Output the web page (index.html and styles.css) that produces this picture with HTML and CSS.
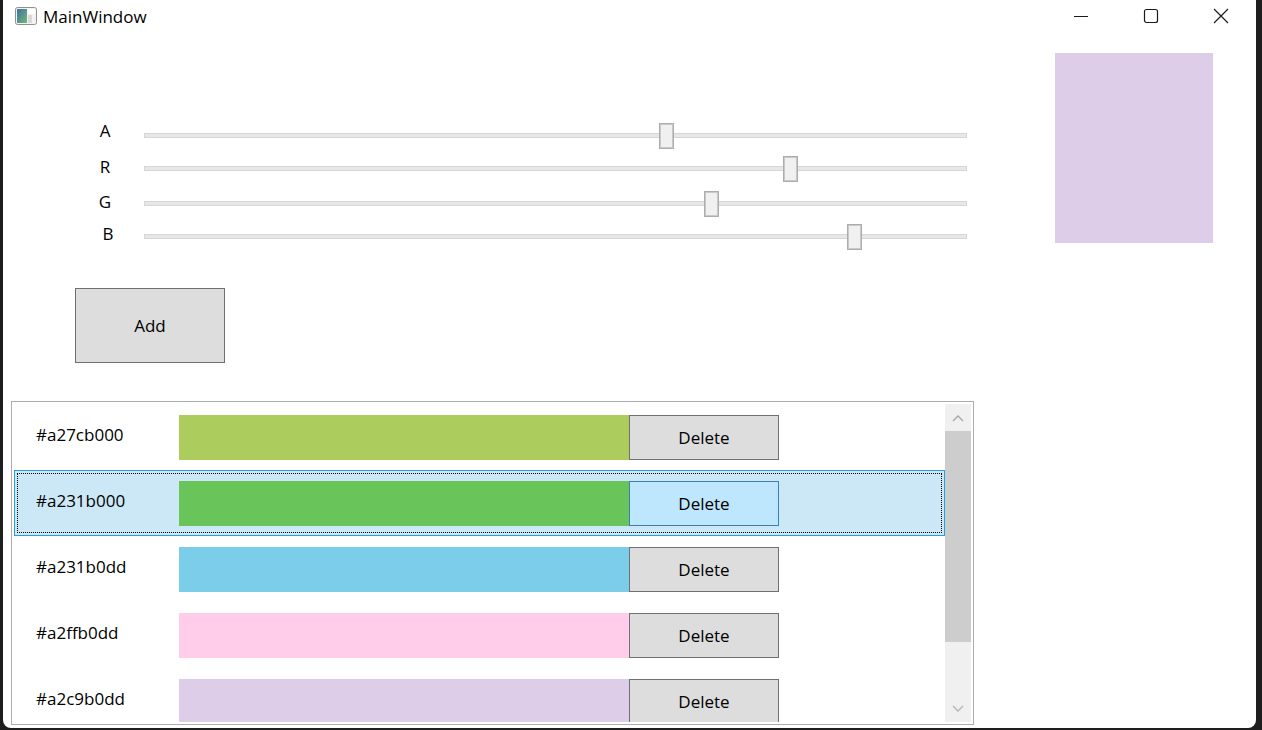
FILE: index.html
```html
<!DOCTYPE html>
<html>
<head>
<meta charset="utf-8">
<title>MainWindow</title>
<link rel="stylesheet" href="styles.css">
</head>
<body>
<div class="window">
  <div class="titlebar">
    <svg class="app-icon" width="22" height="18" viewBox="0 0 22 18">
      <defs>
        <linearGradient id="g" x1="0" y1="0" x2="1" y2="1">
          <stop offset="0" stop-color="#3f6fa6"/>
          <stop offset="1" stop-color="#6dbb73"/>
        </linearGradient>
      </defs>
      <rect x="0.5" y="0.5" width="21" height="17" rx="2" fill="#f3f3f3" stroke="#8f8f8f"/>
      <rect x="2" y="2" width="10" height="14" fill="url(#g)"/>
      <rect x="13" y="2" width="7" height="5" fill="#ffffff"/>
      <rect x="13" y="8" width="4" height="8" fill="#d9d9d9"/>
    </svg>
    <span class="title">MainWindow</span>
    <div class="caption">
      <span class="cap-btn">
        <svg width="16" height="16" viewBox="0 0 16 16"><line x1="1" y1="8.5" x2="15" y2="8.5" stroke="#1a1a1a" stroke-width="1"/></svg>
      </span>
      <span class="cap-btn">
        <svg width="16" height="16" viewBox="0 0 16 16"><rect x="1.5" y="1.5" width="13" height="13" rx="2" fill="none" stroke="#1a1a1a" stroke-width="1.2"/></svg>
      </span>
      <span class="cap-btn">
        <svg width="16" height="16" viewBox="0 0 16 16"><path d="M1 1 L15 15 M15 1 L1 15" stroke="#1a1a1a" stroke-width="1.2"/></svg>
      </span>
    </div>
  </div>

  <div class="main">
    <div class="left">
      <div class="sliders">
        <div class="srow">
          <span class="slabel">A</span>
          <div class="track"><div class="thumb" style="--v:0.635"></div></div>
        </div>
        <div class="srow">
          <span class="slabel">R</span>
          <div class="track"><div class="thumb" style="--v:0.788"></div></div>
        </div>
        <div class="srow">
          <span class="slabel">G</span>
          <div class="track"><div class="thumb" style="--v:0.69"></div></div>
        </div>
        <div class="srow">
          <span class="slabel b">B</span>
          <div class="track"><div class="thumb" style="--v:0.867"></div></div>
        </div>
      </div>

      <button class="btn add">Add</button>

      <div class="listbox">
        <div class="items">
          <div class="item">
            <span class="hex">#a27cb000</span>
            <span class="bar" style="background: rgba(124,176,0,0.635)"></span>
            <span class="btn del">Delete</span>
          </div>
          <div class="item selected">
            <span class="hex">#a231b000</span>
            <span class="bar" style="background: rgba(49,176,0,0.635)"></span>
            <span class="btn del">Delete</span>
          </div>
          <div class="item">
            <span class="hex">#a231b0dd</span>
            <span class="bar" style="background: rgba(49,176,221,0.635)"></span>
            <span class="btn del">Delete</span>
          </div>
          <div class="item">
            <span class="hex">#a2ffb0dd</span>
            <span class="bar" style="background: rgba(255,176,221,0.635)"></span>
            <span class="btn del">Delete</span>
          </div>
          <div class="item">
            <span class="hex">#a2c9b0dd</span>
            <span class="bar" style="background: rgba(201,176,221,0.635)"></span>
            <span class="btn del">Delete</span>
          </div>
        </div>
        <div class="scrollbar">
          <div class="sb-btn up">
            <svg width="12" height="8" viewBox="0 0 12 8"><polyline points="1,7 6,2 11,7" fill="none" stroke="#a6a6a6" stroke-width="1.3"/></svg>
          </div>
          <div class="sb-track"><div class="sb-thumb"></div></div>
          <div class="sb-btn down">
            <svg width="12" height="8" viewBox="0 0 12 8"><polyline points="1,1 6,6 11,1" fill="none" stroke="#b3b3b3" stroke-width="1.3"/></svg>
          </div>
        </div>
      </div>
    </div>

    <div class="preview" style="background: rgba(201,176,221,0.635)"></div>
  </div>
</div>
</body>
</html>
```

FILE: styles.css
```css
* { box-sizing: border-box; }

html, body {
  margin: 0;
  padding: 0;
  width: 1262px;
  height: 730px;
  overflow: hidden;
  background: #1e1e1e;
  font-family: "Open Sans", "Noto Sans", sans-serif;
  color: #000;
}

.window {
  margin-left: 3px;
  width: 1253px;
  height: 728px;
  background: #ffffff;
  border-radius: 0 0 8px 8px;
  overflow: hidden;
  display: flex;
  flex-direction: column;
}

.titlebar {
  height: 31px;
  flex: none;
  display: flex;
  align-items: center;
}

.app-icon {
  margin-left: 12px;
  margin-top: 1px;
}

.title {
  margin-left: 6px;
  font-size: 17px;
  margin-top: 1px;
}

.caption {
  margin-left: auto;
  display: flex;
  height: 31px;
}

.cap-btn {
  width: 70px;
  height: 31px;
  display: flex;
  align-items: center;
  justify-content: center;
}

.main {
  display: flex;
  flex: 1;
}

.left {
  width: 971px;
  flex: none;
  display: flex;
  flex-direction: column;
}

.sliders {
  margin-top: 91px;
  display: flex;
  flex-direction: column;
}

.srow {
  height: 26px;
  display: flex;
  align-items: center;
}
.srow:nth-child(2) { margin-top: 7px; }
.srow:nth-child(3) { margin-top: 9px; }
.srow:nth-child(4) { margin-top: 7px; }

.slabel {
  width: 50px;
  margin-left: 77px;
  text-align: center;
  font-size: 17px;
  line-height: 20px;
  margin-top: -3px;
}
.srow:nth-child(1) .slabel { margin-top: -9px; }
.srow:nth-child(4) .slabel { margin-top: -5px; }
.slabel.b { padding-left: 6px; }

.track {
  margin-left: 14px;
  width: 823px;
  height: 5px;
  background: #e7e7e7;
  border: 1px solid #d6d6d6;
  position: relative;
}

.thumb {
  position: absolute;
  top: -11px;
  left: calc((100% - 11px) * var(--v));
  width: 15px;
  height: 26px;
  background: #f0f0f0;
  border: 1px solid #acacac;
  box-shadow: inset 0 0 0 1px #c9c9c9;
}

.btn {
  background: #dddddd;
  border: 1px solid #707070;
  font-family: "Open Sans", "Noto Sans", sans-serif;
  font-size: 17px;
  color: #000;
  display: flex;
  align-items: center;
  justify-content: center;
  padding: 0;
}

.add {
  margin-top: 39px;
  margin-left: 72px;
  width: 150px;
  height: 75px;
}

.listbox {
  margin-top: 38px;
  margin-left: 8px;
  width: 963px;
  height: 324px;
  border: 1px solid #abadb3;
  padding: 2px;
  display: flex;
  overflow: hidden;
}

.items {
  width: 931px;
  flex: none;
  overflow: hidden;
}

.item {
  height: 66px;
  border: 1px solid transparent;
  display: flex;
  align-items: flex-start;
  padding-top: 10px;
  position: relative;
  flex: none;
}

.item.selected {
  background: #cce8f6;
  border-color: #26a0da;
}
.item.selected::after {
  content: "";
  position: absolute;
  inset: 2px;
  border: 1px dotted #000;
}

.hex {
  width: 164px;
  padding-left: 21px;
  font-size: 17px;
  line-height: 40px;
  height: 45px;
  flex: none;
}

.bar {
  width: 450px;
  height: 45px;
  flex: none;
}

.del {
  width: 150px;
  height: 45px;
  flex: none;
  padding-bottom: 1px;
}

.item.selected .del {
  background: #bee6fd;
  border-color: #3c7fb1;
}

.scrollbar {
  width: 26px;
  flex: none;
  display: flex;
  flex-direction: column;
  background: #f0f0f0;
}

.sb-btn {
  display: flex;
  align-items: center;
  justify-content: center;
  flex: none;
}
.sb-btn.up { height: 27px; }
.sb-btn.down { height: 26px; }

.sb-track {
  flex: 1;
}

.sb-thumb {
  height: 211px;
  background: #cdcdcd;
}

.preview {
  margin-left: 81px;
  margin-top: 22px;
  width: 158px;
  height: 190px;
  flex: none;
}
```
